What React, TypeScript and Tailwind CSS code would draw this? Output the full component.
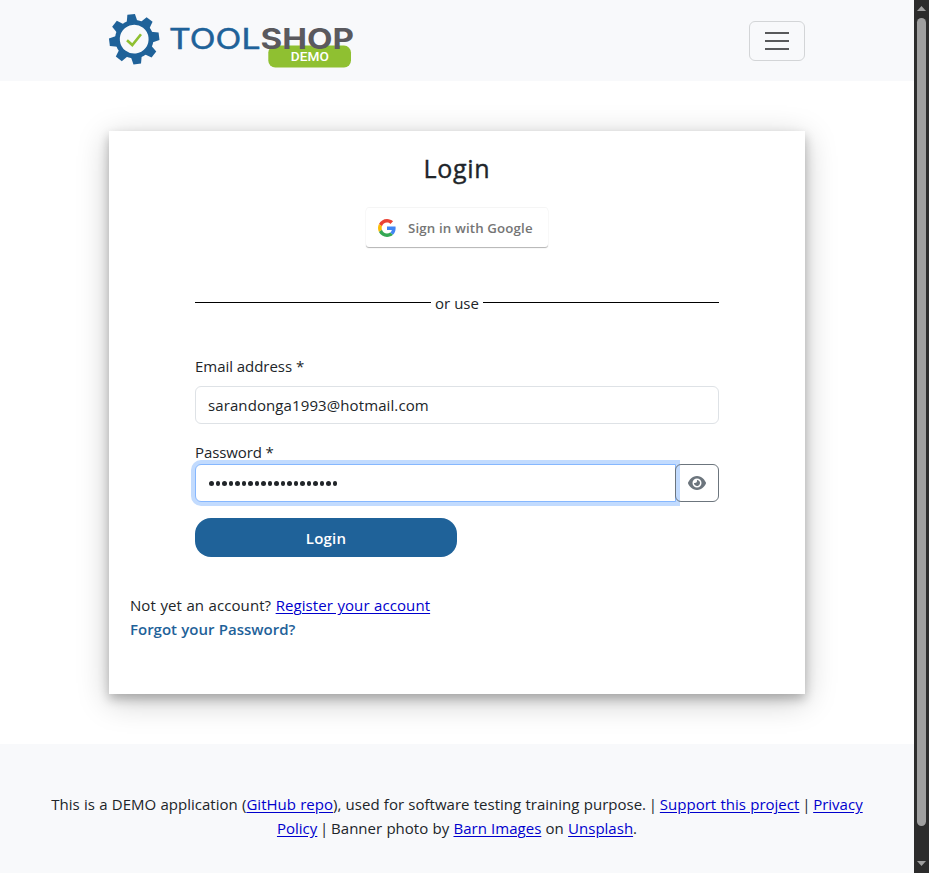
import React from "react";
import { FaEye } from "react-icons/fa6";

const teeth = [0, 45, 90, 135, 180, 225, 270, 315];

function Logo() {
  return (
    <svg width="246" height="56" viewBox="108 14 246 56" className="block">
      <g transform="translate(134.2 40.2) rotate(-7)">
        <circle r="16.8" fill="none" stroke="#1f6299" strokeWidth="4.8" />
        {teeth.map((angle) => (
          <path key={angle} d="M-5.4 -17.5 L-3.8 -25 H3.8 L5.4 -17.5 Z" fill="#1f6299" transform={`rotate(${angle})`} />
        ))}
      </g>
      <path d="M127 41.2 L132.3 46 L141 35.2" fill="none" stroke="#8fc031" strokeWidth="2.6" />
      <rect x="268.3" y="46.6" width="82.7" height="22" rx="7" fill="#8fc031" />
      <text x="169" y="49.9" textLength="91.5" lengthAdjust="spacingAndGlyphs" fontFamily="Inter, sans-serif" fontSize="28" fontWeight="400" fill="#1f6299" stroke="#1f6299" strokeWidth=".5">TOOL</text>
      <text x="260.5" y="49.9" textLength="93.5" lengthAdjust="spacingAndGlyphs" fontFamily="Inter, sans-serif" fontSize="28" fontWeight="700" fill="#5a595e">SHOP</text>
      <text x="290.8" y="62.1" textLength="38" lengthAdjust="spacingAndGlyphs" fontFamily="Roboto, sans-serif" fontSize="13.5" fontWeight="500" fill="#fff">DEMO</text>
    </svg>
  );
}

function GoogleMark() {
  return (
    <svg width="18" height="18" viewBox="0 0 48 48">
      <path fill="#EA4335" d="M24 9.5c3.54 0 6.71 1.22 9.21 3.6l6.85-6.85C35.9 2.38 30.47 0 24 0 14.62 0 6.51 5.38 2.56 13.22l7.98 6.19C12.43 13.72 17.74 9.5 24 9.5z" />
      <path fill="#4285F4" d="M46.98 24.55c0-1.57-.15-3.09-.38-4.55H24v9.02h12.94c-.58 2.96-2.26 5.48-4.78 7.18l7.73 6c4.51-4.18 7.09-10.36 7.09-17.65z" />
      <path fill="#FBBC05" d="M10.53 28.59c-.48-1.45-.76-2.99-.76-4.59s.27-3.14.76-4.59l-7.98-6.19C.92 16.46 0 20.12 0 24c0 3.88.92 7.54 2.56 10.78l7.97-6.19z" />
      <path fill="#34A853" d="M24 48c6.48 0 11.93-2.13 15.89-5.81l-7.73-6c-2.15 1.45-4.92 2.3-8.16 2.3-6.26 0-11.57-4.22-13.47-9.91l-7.98 6.19C6.51 42.62 14.62 48 24 48z" />
    </svg>
  );
}

function Link({ children }: { children: React.ReactNode }) {
  return <a href="#" className="text-[#0000cd] underline underline-offset-2">{children}</a>;
}

function Pipe() {
  return <span className="mx-[-1.5px]">|</span>;
}

function Scrollbar() {
  return (
    <div className="flex h-full w-[15px] shrink-0 flex-col items-center bg-[#2c2c2c]">
      <svg width="15" height="18" viewBox="0 0 15 18"><path d="M3 11 L7.5 6 L12 11 Z" fill="#9f9f9f" /></svg>
      <div className="h-[808px] w-[9px] rounded-full bg-[#9f9f9f]" />
      <svg className="mt-auto" width="15" height="18" viewBox="0 0 15 18"><path d="M3 6 L7.5 11 L12 6 Z" fill="#9f9f9f" /></svg>
    </div>
  );
}

export default function App() {
  return (
    <div className="flex h-[873px] w-[929px] overflow-hidden bg-white font-['Open_Sans',sans-serif] text-[15px] leading-6 text-[#212529]">
      <div className="flex min-w-0 flex-1 flex-col">
        <header className="flex h-[81px] shrink-0 items-center justify-between bg-[#f8f9fb] pr-[109px] pl-[108px]">
          <Logo />
          <button className="flex h-10 w-14 items-center justify-center rounded-md border border-[#d3d5d7]">
            <svg width="30" height="30" viewBox="0 0 30 30" stroke="#58595b" strokeWidth="2">
              <path d="M3 7h24M3 15h24M3 23h24" />
            </svg>
          </button>
        </header>

        <main className="mx-[109px] mt-[50px] flex h-[563px] w-[696px] shrink-0 flex-col bg-white shadow-[0_5px_10px_0_rgba(0,0,0,0.24),0_7px_30px_0_rgba(0,0,0,0.22)]">
          <h3 className="mt-5 text-center text-[25px] leading-[34px] font-medium tracking-[0.7px] [-webkit-text-stroke:0.4px_#212529]">Login</h3>
          <button className="mx-auto mt-[23px] flex h-[39px] w-[182px] items-center rounded-[3px] pl-3 text-[13.3px] font-semibold tracking-[0.13px] text-[#757575] shadow-[0_-1px_0_rgba(0,0,0,0.04),0_1px_1px_rgba(0,0,0,0.3)]">
            <GoogleMark />
            <span className="ml-3 whitespace-nowrap">Sign in with Google</span>
          </button>

          <div className="mx-[86px] mt-[44px] flex h-6 items-start">
            <span className="mt-[11px] h-px flex-1 bg-black" />
            <span className="w-[52px] text-center">or use</span>
            <span className="mt-[11px] h-px flex-1 bg-black" />
          </div>

          <form className="mx-[86px] mt-[39px] flex flex-col">
            <label className="tracking-[-0.04px]">Email address *</label>
            <div className="mt-2 flex h-[38px] items-center rounded-md border border-[#dee2e6] px-3 tracking-[0.1px]">sarandonga1993@hotmail.com</div>
            <label className="mt-4 tracking-[-0.1px]">Password *</label>
            <div className="flex h-[38px]">
              <div className="z-10 flex w-[481px] items-center rounded-l-md border border-[#86b7fe] bg-white pt-px pl-[13px] shadow-[0_0_0_4px_#c2dbfe]">
                <div className="flex gap-[2px]">
                  {Array.from({ length: 20 }, (_, i) => (
                    <span key={i} className="size-[4.5px] rounded-full bg-[#212529]" />
                  ))}
                </div>
              </div>
              <div className="z-20 -ml-px flex w-[44px] items-center justify-center rounded-md border border-[#6c757d] text-[#6c757d]">
                <FaEye size={18} />
              </div>
            </div>
            <button className="mt-4 h-[39px] w-[262px] rounded-[16px] bg-[#1f6299] font-semibold tracking-[0.2px] text-white">Login</button>
          </form>

          <div className="mt-9 ml-[21px]">
            <p className="tracking-[0.08px] [word-spacing:0.5px]">Not yet an account? <Link>Register your account</Link></p>
            <p className="font-semibold text-[#1f6299] [word-spacing:0.4px]">Forgot your Password?</p>
          </div>
        </main>

        <footer className="mt-[50px] flex-1 bg-[#f8f9fb] pt-12 text-center tracking-[0.01px] whitespace-nowrap [word-spacing:0.35px]">
          <p>This is a DEMO application (<Link>GitHub repo</Link>), used for software testing training purpose. <Pipe /> <Link>Support this project</Link> <Pipe /> <Link>Privacy</Link></p>
          <p><Link>Policy</Link> <Pipe /> Banner photo by <Link>Barn Images</Link> on <Link>Unsplash</Link>.</p>
        </footer>
      </div>
      <Scrollbar />
    </div>
  );
}
